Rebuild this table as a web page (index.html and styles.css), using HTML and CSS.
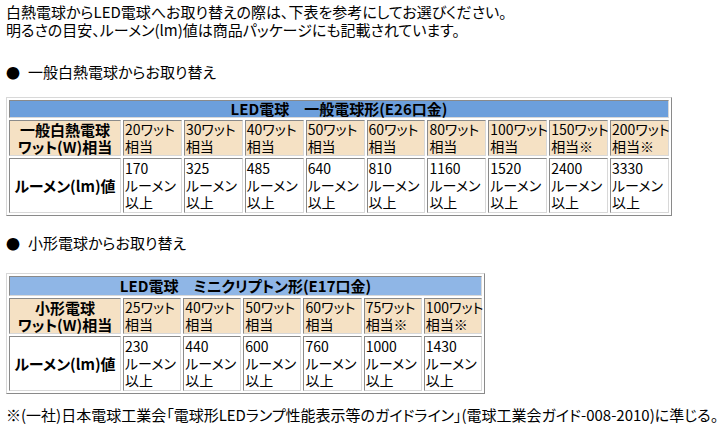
FILE: index.html
```html
<!DOCTYPE html>
<html lang="ja">
<head>
<meta charset="utf-8">
<title>LED電球 お取り替えの目安</title>
<link rel="stylesheet" href="styles.css">
</head>
<body>
<p class="intro">白熱電球からLED電球へお取り替えの際は、下表を参考にしてお選びください。<br>明るさの目安、ルーメン(lm)値は商品パッケージにも記載されています。</p>

<p class="sec sec-first"><span class="dot">●</span>一般白熱電球からお取り替え</p>
<table class="spec spec-wide">
<colgroup><col class="col-label"><col span="9"></colgroup>
<tr><th colspan="10" class="title title-dark">LED電球　一般電球形(E26口金)</th></tr>
<tr class="watt">
<th class="label">一般白熱電球<br>ワット(W)相当</th>
<td>20ワット<br>相当</td><td>30ワット<br>相当</td><td>40ワット<br>相当</td><td>50ワット<br>相当</td><td>60ワット<br>相当</td><td>80ワット<br>相当</td><td>100ワット<br>相当</td><td>150ワット<br>相当※</td><td>200ワット<br>相当※</td>
</tr>
<tr class="lumen">
<th class="label">ルーメン(lm)値</th>
<td>170<br>ルーメン<br>以上</td><td>325<br>ルーメン<br>以上</td><td>485<br>ルーメン<br>以上</td><td>640<br>ルーメン<br>以上</td><td>810<br>ルーメン<br>以上</td><td>1160<br>ルーメン<br>以上</td><td>1520<br>ルーメン<br>以上</td><td>2400<br>ルーメン<br>以上</td><td>3330<br>ルーメン<br>以上</td>
</tr>
</table>

<p class="sec sec-second"><span class="dot">●</span>小形電球からお取り替え</p>
<table class="spec spec-narrow">
<colgroup><col class="col-label"><col span="6"></colgroup>
<tr><th colspan="7" class="title title-light">LED電球　ミニクリプトン形(E17口金)</th></tr>
<tr class="watt">
<th class="label">小形電球<br>ワット(W)相当</th>
<td>25ワット<br>相当</td><td>40ワット<br>相当</td><td>50ワット<br>相当</td><td>60ワット<br>相当</td><td>75ワット<br>相当※</td><td>100ワット<br>相当※</td>
</tr>
<tr class="lumen">
<th class="label">ルーメン(lm)値</th>
<td>230<br>ルーメン<br>以上</td><td>440<br>ルーメン<br>以上</td><td>600<br>ルーメン<br>以上</td><td>760<br>ルーメン<br>以上</td><td>1000<br>ルーメン<br>以上</td><td>1430<br>ルーメン<br>以上</td>
</tr>
</table>

<p class="note">※(一社)日本電球工業会「電球形LEDランプ性能表示等のガイドライン」(電球工業会ガイド-008-2010)に準じる。</p>
</body>
</html>
```

FILE: styles.css
```css
html, body {
  margin: 0;
  padding: 0;
  background: #ffffff;
}
body {
  padding: 3px 0 0 6px;
  font-family: "Noto Sans CJK JP", "Noto Sans", sans-serif;
  font-size: 15px;
  color: #000000;
  font-feature-settings: "palt";
}
p {
  margin: 0;
  line-height: 18px;
}
.sec-first {
  margin-top: 24px;
  margin-bottom: 16px;
}
.sec-second {
  margin-top: 18px;
  margin-bottom: 21px;
}
.dot {
  display: inline-block;
  width: 22px;
  font-size: 14px;
}
.spec {
  border-collapse: separate;
  border-spacing: 2px;
  border: 1px solid;
  border-color: #d8d8d8 #8a8a8a #8a8a8a #d8d8d8;
  table-layout: fixed;
}
.spec-wide {
  width: 666px;
}
.spec-narrow {
  width: 479px;
}
.col-label {
  width: 112px;
}
.spec th,
.spec td {
  box-sizing: border-box;
  border: 1px solid;
  border-color: #8a8a8a #d8d8d8 #d8d8d8 #8a8a8a;
  padding: 0 1px;
  white-space: nowrap;
}
.spec .title {
  font-size: 15px;
  font-weight: bold;
  line-height: 16px;
  text-align: center;
}
.title-dark {
  background: #6c9fdc;
}
.title-light {
  background: #8fb6e6;
}
.spec-narrow .title {
  line-height: 18px;
}
.spec .label {
  font-size: 15px;
  font-weight: bold;
  text-align: center;
  vertical-align: middle;
  line-height: 17px;
  padding: 0;
}
.spec td {
  font-size: 14px;
  line-height: 17px;
  text-align: left;
  vertical-align: top;
}
.watt th,
.watt td {
  background: #f5e1c4;
}
.lumen th,
.lumen td {
  background: #ffffff;
  padding-top: 1px;
  padding-bottom: 1px;
}
.note {
  margin-top: 12px;
  font-size: 15px;
  white-space: nowrap;
}
```
